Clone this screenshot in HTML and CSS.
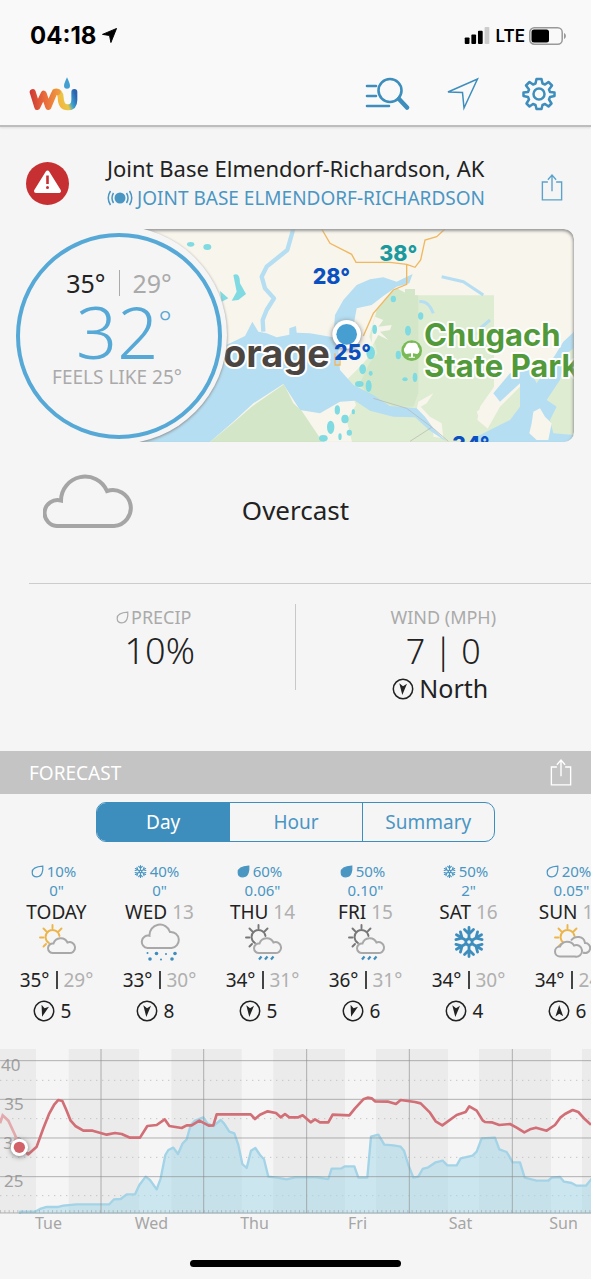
FILE: index.html
```html
<!doctype html>
<html lang="en">
<head>
<meta charset="utf-8">
<meta name="viewport" content="width=device-width, initial-scale=1">
<title>Weather Underground</title>
<link rel="stylesheet" href="styles.css">
</head>
<body>

<!-- shared icons -->
<svg class="defs" aria-hidden="true">
	<symbol id="share" viewBox="0 0 24 30">
		<path d="M7.500 9H1.500V28.500H22.500V9H16.500M12 19V2M7.500 6.500L12 1.500L16.500 6.500" fill="none" stroke="currentColor" stroke-width="1.500"/>
	</symbol>
	<symbol id="drop" viewBox="0 0 13 13">
		<path d="M11.800 1.200C12.200 6 11 11.800 6 11.800C3 11.800 1.200 10 1.200 7.400C1.200 3.500 6 1.500 11.800 1.200Z" stroke="currentColor" stroke-width="1.200"/>
	</symbol>
	<symbol id="flake" viewBox="0 0 32 32">
		<g fill="none" stroke="currentColor" stroke-width="2.800" stroke-linecap="round">
			<circle cx="16" cy="16" r="3.200"/>
			<g id="arm"><path d="M16 12.500V1.500M11.500 3.500L16 8L20.500 3.500"/></g>
			<use href="#arm" transform="rotate(60 16 16)"/>
			<use href="#arm" transform="rotate(120 16 16)"/>
			<use href="#arm" transform="rotate(180 16 16)"/>
			<use href="#arm" transform="rotate(240 16 16)"/>
			<use href="#arm" transform="rotate(300 16 16)"/>
		</g>
	</symbol>
	<symbol id="wind" viewBox="0 0 22 22">
		<circle cx="11" cy="11" r="9.700" fill="none" stroke="currentColor" stroke-width="1.500"/>
		<path d="M10.300 17L7.300 5.300L11 8.300L15 5.800Z" fill="currentColor"/>
	</symbol>
	<symbol id="cloud" viewBox="-2 0 92 54">
		<path d="M13.500 52H69A18 18 0 1 0 62 17A24 24 0 0 0 16 26.500A13 13 0 1 0 13.500 52Z"/>
	</symbol>
	<symbol id="sun" viewBox="0 0 26 26">
		<path d="M10 19A7 7 0 1 1 20.500 12M13.500 1V4.500M4.500 4.500L7 7M1 13.500H4.500M4.500 22.500L7 20M22.500 4.500L20 7" fill="none" stroke="currentColor" stroke-width="1.900" stroke-linecap="round"/>
	</symbol>
	<symbol id="partly" viewBox="0 0 40 38">
		<use href="#sun" x="2" y="1" width="26" height="26" class="sun"/>
		<path d="M16.500 30H31.500A5.500 5.500 0 1 0 30.500 19.500A7.500 7.500 0 0 0 16.500 20.500A4.800 4.800 0 1 0 16.500 30Z" class="cloud"/>
	</symbol>
	<symbol id="showers" viewBox="0 0 40 38">
		<use href="#sun" x="2" y="1" width="26" height="26" class="sun dark"/>
		<path d="M16.500 30H31.500A5.500 5.500 0 1 0 30.500 19.500A7.500 7.500 0 0 0 16.500 20.500A4.800 4.800 0 1 0 16.500 30Z" class="cloud"/>
		<path d="M16 36.500L18.500 33.500M22 36.500L24.500 33.500M28 36.500L30.500 33.500" class="rain"/>
	</symbol>
	<symbol id="snow" viewBox="0 0 40 38">
		<path d="M7.500 25H31.500A7 7 0 1 0 30 9A10.500 10.500 0 0 0 9.500 12.800A6.200 6.200 0 1 0 7.500 25Z" class="cloud"/>
		<g class="dots">
			<circle cx="7.500" cy="30" r="1"/><circle cx="16.500" cy="30.500" r="1.800"/><circle cx="26" cy="31" r="1"/><circle cx="35" cy="30.500" r="1.800"/>
			<circle cx="10" cy="36" r="1.800"/><circle cx="21" cy="36.500" r="1"/><circle cx="32" cy="36" r="1.800"/>
		</g>
	</symbol>
	<symbol id="cloudy" viewBox="0 0 40 38">
		<use href="#sun" x="2" y="1" width="26" height="26" class="sun"/>
		<path d="M19 17.500C23 12 32 13 33 20A5 5 0 1 1 31 29.500" class="cloud"/>
		<path d="M8 33.500H23A5.800 5.800 0 1 0 22 22.500A8 8 0 0 0 8 23.500A5 5 0 1 0 8 33.500Z" class="cloud"/>
	</symbol>
</svg>

<header class="topbar">
	<div class="status">
		<span class="time">04:18</span>
		<svg class="loc" viewBox="0 0 16 16"><path d="M15.500 .5L9.500 15.500L8 8L.5 6.800Z" stroke="#000" stroke-linejoin="round"/></svg>
		<svg class="signal" viewBox="0 0 27 18">
			<rect x="0" y="11" width="5" height="7" rx="1"/><rect x="7" y="8" width="5" height="10" rx="1"/><rect x="14" y="4" width="5" height="14" rx="1"/><rect x="21" y="0" width="5" height="18" rx="1" class="off"/>
		</svg>
		<span class="lte">LTE</span>
		<svg class="battery" viewBox="0 0 38 18">
			<rect x=".8" y=".8" width="32.400" height="16.400" rx="4.500" class="shell"/><rect x="2.500" y="2.500" width="17.500" height="13" rx="2.500"/><path d="M35 6C37.500 7 37.500 11 35 12Z" class="tip"/>
		</svg>
	</div>
	<nav class="tools">
		<svg class="logo" viewBox="28 20 150 106" role="img" aria-label="WU">
			<defs>
				<linearGradient id="warm" gradientUnits="userSpaceOnUse" x1="32" y1="0" x2="118" y2="0"><stop offset="0" stop-color="#cf3a36"/><stop offset=".5" stop-color="#e96a3a"/><stop offset="1" stop-color="#ee9a40"/></linearGradient>
				<linearGradient id="cool" gradientUnits="userSpaceOnUse" x1="115" y1="95" x2="168" y2="75"><stop offset="0" stop-color="#f5b43c"/><stop offset=".4" stop-color="#e8c84a"/><stop offset=".65" stop-color="#39a3d0"/><stop offset="1" stop-color="#2c62b0"/></linearGradient>
			</defs>
			<path d="M106 66Q122 64 123 84Q124 113 144 113Q164 113 164 90V67" fill="none" stroke="url(#cool)" stroke-width="18" stroke-linecap="round"/>
			<path d="M39 67L53 112L72 72L86 112L102 74Q106 65 114 67" fill="none" stroke="url(#warm)" stroke-width="18" stroke-linecap="round" stroke-linejoin="round"/>
			<path d="M142 23Q151 42 151 48A9 9 0 0 1 133 48Q133 42 142 23Z" fill="#439fd1"/>
		</svg>
		<button type="button" class="tool" aria-label="Search">
			<svg width="46" height="34" viewBox="0 0 46 34"><g fill="none" stroke="currentColor" stroke-width="2.600" stroke-linecap="round"><path d="M3 9H12M3 19H12M3 29H25"/><circle cx="26" cy="13.500" r="11.500"/><path d="M35 22L43 30.500" stroke-width="4.500"/></g></svg>
		</button>
		<button type="button" class="tool" aria-label="My location">
			<svg width="34" height="34" viewBox="0 0 34 34"><path d="M31.500 2L18 31L16.500 15.500L2 15Z" fill="none" stroke="currentColor" stroke-width="1.500"/></svg>
		</button>
		<button type="button" class="tool" aria-label="Settings">
			<svg width="34" height="34" viewBox="0 0 34 34"><g fill="none" stroke="currentColor" stroke-width="2.500" stroke-linejoin="round"><circle cx="17" cy="17" r="5.500"/><path d="M14.500 2H19.500L20.500 6.500L23 7.500L26.500 5L30 8.500L27 12.500L28 15L32.500 15.500V19L28 20L27 22.500L29.500 26.500L26.500 29.500L23 27L20.500 28L19.500 32H14.500L13.500 28L11 27L7.500 29.500L4.500 26.500L7 22.500L6 20L1.500 19V15.500L6 15L7 12.500L4 8.500L7.500 5L11 7.500L13.500 6.500Z"/></g></svg>
		</button>
	</nav>
</header>

<main>
	<section class="place">
		<button type="button" class="alert" aria-label="Weather alert">
			<svg viewBox="0 0 43 43"><circle cx="21.500" cy="21.500" r="21.500" fill="#c73032"/><path d="M21.500 10.500L33 29H10Z" fill="#fff" stroke="#fff" stroke-width="4" stroke-linejoin="round"/><path d="M21.500 13.500V22" stroke="#c73032" stroke-width="2.600"/><circle cx="21.500" cy="25.500" r="1.500" fill="#c73032"/></svg>
		</button>
		<div class="names">
			<h1>Joint Base Elmendorf-Richardson, AK</h1>
			<a href="#station"><svg class="beacon" viewBox="0 0 26 16"><circle cx="13" cy="8" r="5.500" fill="currentColor"/><path d="M6.500 3Q3.500 8 6.500 13M19.500 3Q22.500 8 19.500 13M3.500 1Q-1 8 3.500 15M22.500 1Q27 8 22.500 15" fill="none" stroke="currentColor" stroke-width="1.500"/></svg>JOINT BASE ELMENDORF-RICHARDSON</a>
		</div>
		<button type="button" class="share" aria-label="Share"><svg><use href="#share"/></svg></button>
	</section>

	<section class="current">
		<div class="frame">
			<svg class="map" viewBox="354 27 1368 639" preserveAspectRatio="xMinYMid slice">
				<rect x="354" y="27" width="3000" height="639" fill="#f8f5ec"/>
				<!-- park -->
				<path d="M1130 270L1160 232L1190 205L1215 218V207H1245V226H1482V500L1440 560L1432 600L1480 640L1500 666H1056L1040 600L1068 555L1040 480L1080 440L1125 390L1108 350Z" fill="#deecd2"/>
				<path d="M1130 270L1160 232L1190 205L1215 218V207H1245V226H1255V520L1240 560L1180 560L1100 520L1080 490L1108 430L1132 400L1118 340Z" fill="#d3e7c8"/>
				<path d="M1255 545L1300 520L1280 550L1262 560L1290 590L1325 610L1330 655L1300 650L1300 630L1245 590ZM1430 575L1485 535L1490 560L1460 590L1470 620L1440 600Z" fill="#f8f5ec"/>
				<path d="M1125 290L1150 300L1135 320L1175 315L1170 330L1140 335L1165 360L1135 345L1115 380L1118 320Z" fill="#f8f5ec"/>
				<path d="M1500 560L1560 500L1625 450L1722 350V666H1440Z" fill="#deecd2"/>
				<path d="M1722 335L1690 365L1650 430L1610 490L1590 450L1530 460L1480 520L1500 545L1560 490L1560 560L1530 600L1480 625L1430 650V666H1722V645L1660 640L1650 600L1670 560L1640 540L1680 480L1700 400L1722 385Z" fill="#b5def2"/>
				<path d="M1600 575L1620 565L1635 590L1655 610L1645 660L1610 660L1588 640L1595 610Z" fill="#f8f5ec"/>
				<!-- inlet -->
				<path d="M620 400L690 370L735 348L757 305L775 335L800 340L830 352L868 344L868 325L888 318L890 338L930 340L1000 352L1005 285L1030 240L1070 195L1110 178L1150 172L1190 185L1238 162L1228 190L1190 200L1150 228L1115 255L1070 265L1060 320L1050 360L1015 390L1020 450L1060 495L1120 525L1170 558L1250 565L1275 590L1300 625L1340 665L1290 632L1245 592L1180 590L1110 572L1065 542L1020 545L960 580L900 570L850 492L760 550L700 605L630 666H354V500Z" fill="#b5def2"/>
				<path d="M630 666L700 608L755 560L852 493L880 550L905 572L968 666Z" fill="#d3e7c8"/>
				<path d="M880 27L862 90L800 140L785 170L795 205L822 235L800 270L788 300L790 335" fill="none" stroke="#b5def2" stroke-width="13" stroke-linejoin="round"/>
				<path d="M1325 170L1390 185L1450 225M1258 245Q1285 240 1300 280M1435 330L1470 300M1430 340L1470 345" fill="none" stroke="#b5def2" stroke-width="9"/>
				<!-- radar echoes -->
				<g fill="#7fdbe1">
					<ellipse cx="572" cy="73" rx="11" ry="7"/><ellipse cx="622" cy="81" rx="12" ry="9"/>
					<path d="M700 165Q720 155 720 190L738 222L715 240L695 242L710 215ZM660 213L685 235L665 245Z"/>
					<ellipse cx="1180" cy="237" rx="8" ry="10"/><ellipse cx="1124" cy="328" rx="7" ry="14"/><ellipse cx="1224" cy="332" rx="9" ry="15"/><ellipse cx="1262" cy="288" rx="8" ry="11"/><ellipse cx="1112" cy="398" rx="13" ry="20"/><ellipse cx="1088" cy="448" rx="10" ry="15"/><ellipse cx="1106" cy="498" rx="9" ry="18"/><ellipse cx="1078" cy="492" rx="13" ry="9"/><ellipse cx="1112" cy="460" rx="6" ry="8"/><ellipse cx="1245" cy="472" rx="7" ry="14"/><ellipse cx="1215" cy="478" rx="8" ry="6"/><ellipse cx="1195" cy="405" rx="8" ry="13"/>
					<ellipse cx="1012" cy="570" rx="8" ry="14"/><ellipse cx="1035" cy="597" rx="11" ry="13"/><ellipse cx="992" cy="622" rx="11" ry="20"/><ellipse cx="970" cy="655" rx="13" ry="10"/><ellipse cx="1048" cy="638" rx="8" ry="9"/><ellipse cx="1060" cy="575" rx="5" ry="8"/><ellipse cx="1020" cy="650" rx="5" ry="10"/>
				</g>
				<path d="M965 27L990 70L1055 103L1068 127H1170L1220 133L1245 142L1262 120L1275 60L1310 50L1335 27M1220 135V193L1180 210L1120 280L1090 348M1005 400V435H1020V400" fill="none" stroke="#f0b860" stroke-width="4"/>
				<path d="M1120 535L1220 565L1300 625L1345 664M1230 664L1295 622" fill="none" stroke="#b4b4b0" stroke-width="2"/>
				<!-- labels -->
				<text x="990" y="442" text-anchor="end" class="city">orage</text>
				<circle cx="1040" cy="343" r="43" fill="#fff" class="pin"/><circle cx="1040" cy="343" r="31" fill="#479fd1"/>
				<circle cx="1235" cy="392" r="31" fill="#79b956"/>
				<path d="M1233 400L1218 402Q1206 390 1216 380Q1220 366 1235 369Q1252 366 1254 380Q1264 392 1252 402L1239 400V410H1245V413H1226V410H1233Z" fill="#fff"/>
				<text x="1272" y="377" class="park">Chugach</text>
				<text x="1272" y="472" class="park">State Park</text>
				<text x="1138" y="124" class="temp teal">38°</text>
				<text x="938" y="192" class="temp">28°</text>
				<text x="1002" y="420" class="temp">25°</text>
				<text x="1356" y="695" class="temp">34°</text>
			</svg>
			<div class="halo"></div>
		</div>
		<div class="dial">
			<p class="range">35° <span class="bar"></span> <span class="low">29°</span></p>
			<p class="now">32<sup>°</sup></p>
			<p class="feels">FEELS LIKE 25°</p>
		</div>
	</section>

	<section class="sky">
		<svg class="skyicon"><use href="#cloud"/></svg>
		<p>Overcast</p>
	</section>

	<section class="stats">
		<div class="stat precip">
			<h2><svg class="mini hollow"><use href="#drop"/></svg>PRECIP</h2>
			<p class="big">10%</p>
		</div>
		<div class="stat windy">
			<h2>WIND (MPH)</h2>
			<p class="big pair">7 | 0</p>
			<p class="dir"><svg class="wind"><use href="#wind"/></svg>North</p>
		</div>
	</section>

	<div class="bar-title">
		<h2>FORECAST</h2>
		<button type="button" class="share" aria-label="Share forecast"><svg><use href="#share"/></svg></button>
	</div>

	<div class="tabs">
		<button type="button" class="active">Day</button>
		<button type="button">Hour</button>
		<button type="button">Summary</button>
	</div>

	<ul class="days">
		<li>
			<p class="chance"><svg class="mini hollow"><use href="#drop"/></svg>10%</p>
			<p class="amount">0"</p>
			<h3>TODAY</h3>
			<svg class="icon"><use href="#partly"/></svg>
			<p class="temps">35° <i></i> <span>29°</span></p>
			<p class="speed"><svg class="wind turn"><use href="#wind"/></svg>5</p>
		</li>
		<li>
			<p class="chance"><svg class="mini"><use href="#flake"/></svg>40%</p>
			<p class="amount">0"</p>
			<h3>WED <span>13</span></h3>
			<svg class="icon"><use href="#snow"/></svg>
			<p class="temps">33° <i></i> <span>30°</span></p>
			<p class="speed"><svg class="wind"><use href="#wind"/></svg>8</p>
		</li>
		<li>
			<p class="chance"><svg class="mini"><use href="#drop"/></svg>60%</p>
			<p class="amount">0.06"</p>
			<h3>THU <span>14</span></h3>
			<svg class="icon"><use href="#showers"/></svg>
			<p class="temps">34° <i></i> <span>31°</span></p>
			<p class="speed"><svg class="wind"><use href="#wind"/></svg>5</p>
		</li>
		<li>
			<p class="chance"><svg class="mini"><use href="#drop"/></svg>50%</p>
			<p class="amount">0.10"</p>
			<h3>FRI <span>15</span></h3>
			<svg class="icon"><use href="#showers"/></svg>
			<p class="temps">36° <i></i> <span>31°</span></p>
			<p class="speed"><svg class="wind turn"><use href="#wind"/></svg>6</p>
		</li>
		<li>
			<p class="chance"><svg class="mini"><use href="#flake"/></svg>50%</p>
			<p class="amount">2"</p>
			<h3>SAT <span>16</span></h3>
			<svg class="icon flake"><use href="#flake"/></svg>
			<p class="temps">34° <i></i> <span>30°</span></p>
			<p class="speed"><svg class="wind"><use href="#wind"/></svg>4</p>
		</li>
		<li>
			<p class="chance"><svg class="mini hollow"><use href="#drop"/></svg>20%</p>
			<p class="amount">0.05"</p>
			<h3>SUN <span>17</span></h3>
			<svg class="icon"><use href="#cloudy"/></svg>
			<p class="temps">34° <i></i> <span>24°</span></p>
			<p class="speed"><svg class="wind up"><use href="#wind"/></svg>6</p>
		</li>
	</ul>

	<section class="chart">
		<svg viewBox="0 57 1773 494" class="plot">
			<rect x="0" y="57" width="1773" height="492" fill="#ebebeb"/>
			<path d="M108 57h98v492h-98zM417 57h97v492h-97zM725 57h95v492h-95zM1035 57h93v492h-93zM1344 57h93v492h-93zM1653 57h93v492h-93z" fill="#f5f5f5"/>
			<path d="M0 151H1773M0 266H1773M0 382H1773M0 497H1773" stroke="#c4c4c4" stroke-width="3" stroke-dasharray="4 14"/>
			<g class="ytext"><text x="3" y="124">40</text><text x="13" y="240">35</text><text x="10" y="356">30</text><text x="12" y="472">25</text></g>
			<path d="M60 545L105 545L120 537L140 531L175 531L190 527L230 523L328 523L342 508L362 507L380 493L405 493L418 465L437 440L450 450L470 478L482 445L496 375L505 360L520 353L534 372L548 340L560 328L572 285L585 272L610 262L622 280L640 288L662 270L672 280L688 305L703 310L715 345L727 402L740 414L753 362L766 354L780 375L792 388L805 440L830 443L860 448L885 442L950 442L985 447L995 416L1025 415L1035 409L1063 409L1075 443L1102 443L1113 320L1135 314L1153 344L1180 346L1202 350L1212 362L1225 405L1240 443L1255 440L1268 417L1285 412L1307 397L1328 392L1342 406L1370 406L1382 385L1418 377L1430 365L1445 325L1485 323L1498 358L1520 366L1538 397L1560 397L1574 443L1610 452L1645 452L1655 443L1680 441L1692 455L1715 459L1730 467L1758 467L1780 440V560H60Z" class="rainfall"/>
			<path d="M0 92H1773M0 208H1773M0 324H1773M0 440H1773M0 549H1773M303 57V549M611 57V549M920 57V549M1228 57V549M1537 57V549" stroke="#8c8c8c" stroke-opacity=".65" stroke-width="3"/>
			<path d="M0 544H1773" stroke="#9a9a9a" stroke-opacity=".5" stroke-width="8" stroke-dasharray="3 10"/>
			<path d="M0 280L8 256L25 272L45 315L55 340" fill="none" stroke="#e3a9ad" stroke-width="8"/>
			<path d="M58 352L85 373L110 350L130 295L148 250L162 225L175 210L187 213L198 238L212 272L226 288L250 302L278 302L320 314L345 309L365 312L390 323L420 323L442 288L470 285L494 268L508 288L545 294L560 286L575 286L598 272L626 287L640 286L650 253L752 253L765 267L780 254L803 244L828 249L842 262L855 252L868 262L895 262L908 256L932 277L945 268L960 277L985 277L998 254L1048 256L1065 235L1090 208L1103 203L1115 205L1125 214L1165 215L1188 222L1202 210L1245 216L1262 220L1290 248L1307 274L1327 286L1370 255L1397 246L1408 229L1430 242L1448 271L1455 276L1475 277L1498 285L1530 282L1550 293L1573 307L1590 298L1608 293L1640 302L1665 285L1682 262L1695 252L1718 240L1735 246L1755 268L1773 284" fill="none" stroke="#d16e76" stroke-width="8" stroke-linejoin="round"/>
			<circle cx="58" cy="352" r="26" fill="#fff" class="pin"/><circle cx="58" cy="352" r="17" fill="#d2626a"/>
		</svg>
		<div class="xaxis"><span>Tue</span><span>Wed</span><span>Thu</span><span>Fri</span><span>Sat</span><span>Sun</span></div>
	</section>
</main>

<div class="home"></div>

</body>
</html>
```
FILE: styles.css
```css
* {
	box-sizing: border-box;
}

body {
	margin: 0;
	min-height: 100vh;
	background: #f5f5f5;
	color: #222;
	font-family: "Noto Sans", "Open Sans", sans-serif;
	font-size: 19px;
	line-height: 24px;
	overflow-x: hidden;
	display: flex;
	flex-direction: column;
}

h1, h2, h3, p, ul {
	margin: 0;
	padding: 0;
	font-size: inherit;
	font-weight: 400;
}

svg {
	display: block;
	flex: none;
}

button {
	background: none;
	border: 0;
	padding: 0;
	margin: 0;
	color: inherit;
	font: inherit;
	cursor: pointer;
}

.defs {
	position: absolute;
	width: 0;
	height: 0;
}

/* top */

.topbar {
	height: 127px;
	background: #f9f9f9;
	border-bottom: 2px solid #bdbdbd;
	box-shadow: 0 1px 2px #ddd;
}

.status {
	display: flex;
	align-items: center;
	height: 71px;
	padding: 0 24px 0 30px;
	font-family: Inter, sans-serif;
	color: #000;
}

.time {
	font-size: 24px;
	font-weight: 700;
}

.loc {
	width: 15px;
	height: 15px;
	margin-left: 6px;
}

.signal {
	width: 27px;
	height: 17px;
	margin-left: auto;
}

.off {
	fill: #ccc;
}

.lte {
	margin: 0 4px;
	font-size: 17px;
	font-weight: 600;
}

.battery {
	width: 38px;
	height: 18px;
}

.shell {
	fill: none;
	stroke: #999;
	stroke-width: 1.5;
}

.tip {
	fill: #999;
}

.tools {
	display: flex;
	align-items: center;
	gap: 30px;
	height: 46px;
	padding: 0 29px;
	color: #3d8ebd;
}

.tool {
	display: flex;
	justify-content: center;
	width: 46px;
}

.logo {
	width: 50px;
	height: 36px;
	margin-right: auto;
}

/* location */

.place {
	display: flex;
	align-items: center;
	padding: 26px 28px 0 26px;
}

.alert svg {
	width: 43px;
	height: 43px;
}

.names {
	flex: 1;
	margin-left: 38px;
}

.names h1 {
	font-size: 22px;
	line-height: 30px;
	white-space: nowrap;
}

.names a {
	display: flex;
	align-items: center;
	gap: 4px;
	color: #4a96c3;
	line-height: 30px;
	text-decoration: none;
	white-space: nowrap;
}

.beacon {
	width: 26px;
	height: 16px;
}

.share svg {
	width: 22px;
	height: 29px;
}

.place .share {
	color: #5ba3cc;
	margin-top: 8px;
}

/* map and dial */

.current {
	position: relative;
	margin: 16px 17px 0 118px;
}

.frame {
	position: relative;
	height: 213px;
	border-radius: 0 10px 10px 0;
	overflow: hidden;
}

.frame::after {
	content: "";
	position: absolute;
	inset: 0;
	border-radius: 0 10px 10px 0;
	box-shadow: inset -1px 2px 3px #999;
}

.map {
	width: 100%;
	height: 100%;
}

.halo {
	position: absolute;
	z-index: 1;
	left: -109px;
	top: -3px;
	width: 218px;
	height: 218px;
	border-radius: 50%;
	background: #f5f5f5;
	box-shadow: 0 1px 3px #888;
}

.map text {
	font-family: Inter, sans-serif;
	font-weight: 700;
	paint-order: stroke;
	stroke: #fff;
	stroke-width: 12px;
	stroke-linejoin: round;
}

.map .city {
	font-size: 114px;
	fill: #4b4541;
}

.map .park {
	font-size: 93px;
	fill: #52993a;
}

.map .temp {
	font-size: 64px;
	font-weight: 800;
	fill: #0b50c0;
	stroke: none;
}

.map .teal {
	fill: #1a9a9f;
}

.pin {
	filter: drop-shadow(0 3px 8px #777);
}

.dial {
	position: absolute;
	z-index: 2;
	left: -102px;
	top: 4px;
	width: 206px;
	height: 206px;
	padding-top: 32px;
	border: 4px solid #56a9d6;
	border-radius: 50%;
	background: #f5f5f5;
	text-align: center;
}

.range {
	display: flex;
	justify-content: center;
	align-items: center;
	gap: 13px;
	font-size: 25px;
	line-height: 28px;
}

.bar {
	width: 1px;
	height: 26px;
	background: #aaa;
}

.low {
	color: #aaa;
}

.now {
	padding-left: 10px;
	color: #56a9d6;
	font-size: 72px;
	font-weight: 300;
	line-height: 68px;
}

.now sup {
	font-size: 32px;
	line-height: 0;
}

.feels {
	padding-right: 4px;
	color: #aaa;
}

/* sky */

.sky {
	display: grid;
	grid-template-columns: 1fr auto 1fr;
	align-items: center;
	margin-left: 29px;
	padding: 32px 43px 55px 14px;
	border-bottom: 1px solid #ccc;
}

.skyicon {
	width: 92px;
	height: 54px;
	fill: none;
	stroke: #a5a5a5;
	stroke-width: 4;
}

.sky p {
	font-size: 26px;
	line-height: 32px;
	padding-top: 18px;
}

/* precip / wind */

.stats {
	display: grid;
	grid-template-columns: 1fr 1fr;
	padding: 20px 0 48px;
}

.stat {
	text-align: center;
	height: 99px;
}

.precip {
	padding-left: 25px;
	border-right: 1px solid #c8c8c8;
	height: 86px;
}

.stat h2 {
	display: flex;
	justify-content: center;
	align-items: center;
	gap: 2px;
	font-size: 18px;
	line-height: 26px;
	color: #aaa;
}

.precip h2 {
	padding-right: 12px;
}

.big {
	font-size: 36px;
	font-weight: 350;
	line-height: 42px;
}

.pair {
	font-size: 34px;
}

.dir {
	display: flex;
	justify-content: center;
	align-items: center;
	gap: 5px;
	padding-right: 6px;
	font-size: 25px;
	line-height: 33px;
}

.mini {
	width: 13px;
	height: 13px;
	fill: currentColor;
}

.hollow {
	fill: none;
}

.wind {
	width: 22px;
	height: 22px;
}

.turn {
	transform: rotate(12deg);
}

.up {
	transform: rotate(175deg);
}

/* forecast */

.bar-title {
	display: flex;
	justify-content: space-between;
	align-items: center;
	height: 43px;
	padding: 0 19px 0 29px;
	background: #c4c4c4;
	color: #fff;
}

.tabs {
	display: grid;
	grid-template-columns: repeat(3, 1fr);
	height: 40px;
	margin: 8px 96px 0;
	border: 1px solid #3d8ebd;
	border-radius: 10px;
	overflow: hidden;
	color: #4a96c3;
}

.tabs button + button {
	border-left: 1px solid #3d8ebd;
}

.tabs .active {
	background: #3d8ebd;
	color: #fff;
}

.days {
	display: grid;
	grid-template-columns: repeat(6, 103px);
	margin-left: 5px;
	padding-top: 20px;
	list-style: none;
	text-align: center;
	overflow: hidden;
}

.chance, .amount {
	color: #4a96c3;
	font-size: 15px;
	line-height: 19px;
}

.chance {
	display: flex;
	justify-content: center;
	align-items: center;
	gap: 3px;
	padding-right: 6px;
}

.days h3 {
	line-height: 24px;
}

.days span {
	color: #b0b0b0;
}

.icon {
	width: 40px;
	height: 38px;
	margin: -1px auto 1px;
	color: #3d8ebd;
}

.icon.flake {
	width: 32px;
}

.cloud {
	fill: #f5f5f5;
	stroke: #a8a8a8;
	stroke-width: 2;
}

.sun {
	color: #ecb54b;
}

.dark {
	color: #777;
}

.rain {
	stroke: #3d8ebd;
	stroke-width: 2.2;
}

.dots {
	fill: #3d8ebd;
}

.temps {
	display: flex;
	justify-content: center;
	align-items: center;
	gap: 6px;
	line-height: 36px;
}

.temps i {
	width: 2px;
	height: 18px;
	background: #444;
}

.speed {
	display: flex;
	justify-content: center;
	align-items: center;
	gap: 6px;
	padding-right: 9px;
	line-height: 26px;
}

/* chart */

.chart {
	margin-top: 25px;
	color: #a5a5a5;
	overflow: hidden;
}

.plot {
	width: 100%;
}

.rainfall {
	fill: #a9d8ea;
	fill-opacity: .55;
	stroke: #a3d3e6;
	stroke-width: 7;
	stroke-linejoin: round;
}

.ytext {
	font-size: 51px;
	fill: #a0a0a0;
}

.xaxis {
	display: grid;
	grid-template-columns: repeat(6, 103px);
	margin-left: -3px;
	font-size: 16px;
	line-height: 18px;
	text-align: center;
}

.home {
	width: 211px;
	height: 7px;
	margin: auto auto 12px;
	border-radius: 4px;
	background: #000;
}
```
